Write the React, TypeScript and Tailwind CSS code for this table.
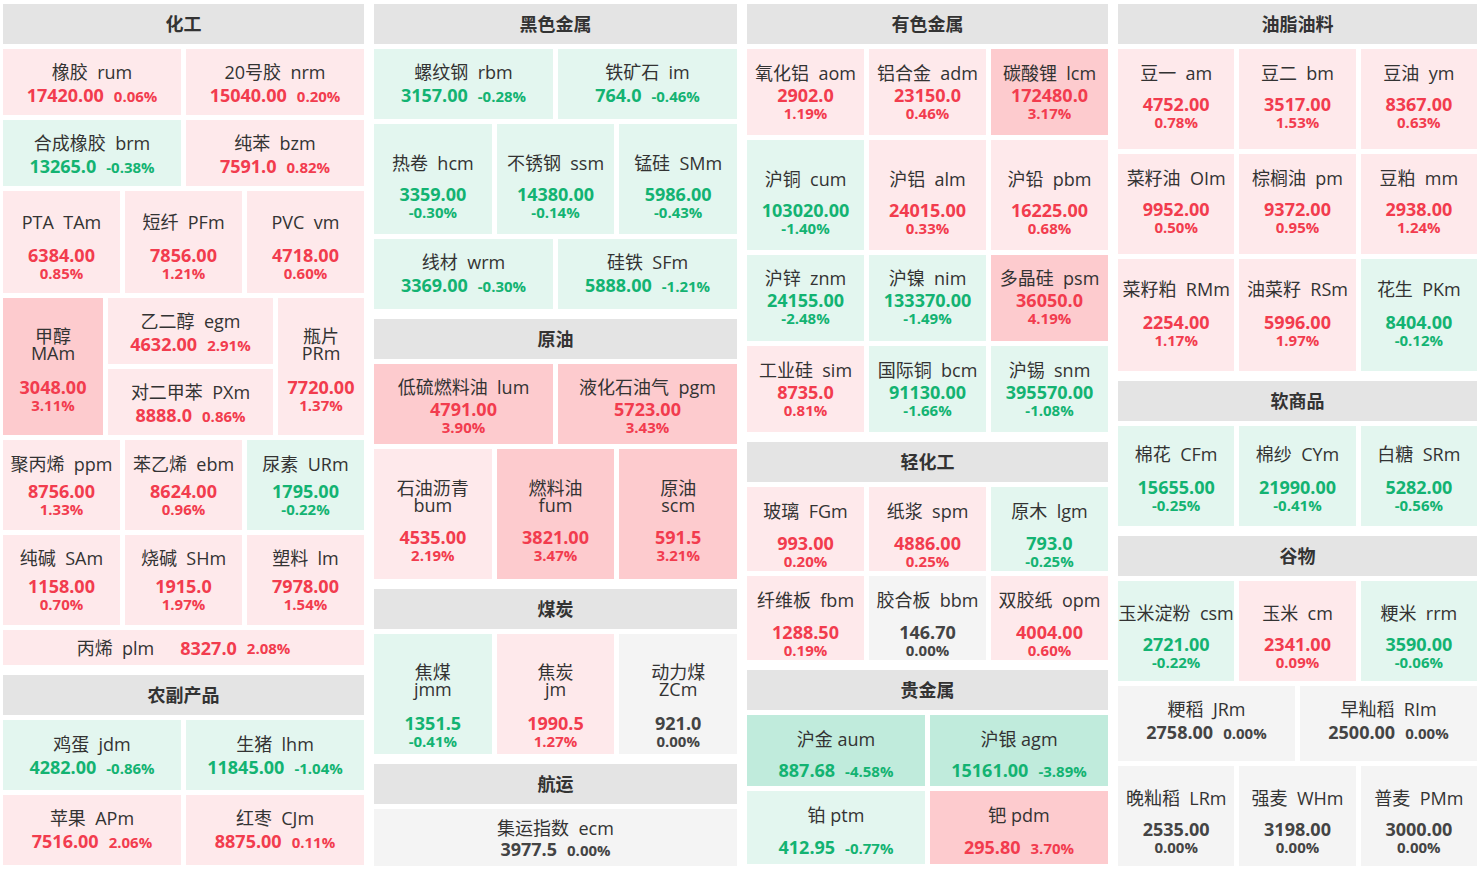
import clsx from 'clsx';

type Mode = 'inline' | 'stack' | 'wrap' | 'line';

type Quote = {
  cn: string;
  code: string;
  price: string;
  pct: string;
  w?: string;
  mode?: Mode;
  pt?: string;
  gap?: string;
  single?: boolean;
};

type Row = {
  h: string;
  mode: Mode;
  pt?: string;
  gap?: string;
  items: (Quote | Quote[])[];
};

type Section = { title: string; rows: Row[] };

const q = (cn: string, code: string, price: string, pct: string, extra: Partial<Quote> = {}): Quote => ({
  cn,
  code,
  price,
  pct,
  ...extra,
});

const columns: Section[][] = [
  [
    {
      title: '化工',
      rows: [
        { h: 'h-[66px]', mode: 'inline', pt: 'pt-[11px]', items: [q('橡胶', 'rum', '17420.00', '0.06%'), q('20号胶', 'nrm', '15040.00', '0.20%')] },
        { h: 'h-[66px]', mode: 'inline', pt: 'pt-[11px]', items: [q('合成橡胶', 'brm', '13265.0', '-0.38%'), q('纯苯', 'bzm', '7591.0', '0.82%')] },
        {
          h: 'h-[102px]',
          mode: 'stack',
          pt: 'pt-[19px]',
          gap: 'mt-[11px]',
          items: [q('PTA', 'TAm', '6384.00', '0.85%'), q('短纤', 'PFm', '7856.00', '1.21%'), q('PVC', 'vm', '4718.00', '0.60%')],
        },
        {
          h: 'h-[137px]',
          mode: 'inline',
          pt: 'pt-[11px]',
          items: [
            q('甲醇', 'MAm', '3048.00', '3.11%', { w: 'w-[100px]', mode: 'wrap', pt: 'pt-[30px]', gap: 'mt-[15px]' }),
            [q('乙二醇', 'egm', '4632.00', '2.91%'), q('对二甲苯', 'PXm', '8888.0', '0.86%')],
            q('瓶片', 'PRm', '7720.00', '1.37%', { w: 'w-[86px]', mode: 'wrap', pt: 'pt-[30px]', gap: 'mt-[15px]' }),
          ],
        },
        {
          h: 'h-[90px]',
          mode: 'stack',
          pt: 'pt-[12px]',
          gap: 'mt-[5px]',
          items: [q('聚丙烯', 'ppm', '8756.00', '1.33%'), q('苯乙烯', 'ebm', '8624.00', '0.96%'), q('尿素', 'URm', '1795.00', '-0.22%')],
        },
        {
          h: 'h-[90px]',
          mode: 'stack',
          pt: 'pt-[11px]',
          gap: 'mt-[6px]',
          items: [q('纯碱', 'SAm', '1158.00', '0.70%'), q('烧碱', 'SHm', '1915.0', '1.97%'), q('塑料', 'lm', '7978.00', '1.54%')],
        },
        { h: 'h-[35px]', mode: 'line', items: [q('丙烯', 'plm', '8327.0', '2.08%')] },
      ],
    },
    {
      title: '农副产品',
      rows: [
        { h: 'h-[70px]', mode: 'inline', pt: 'pt-[12px]', items: [q('鸡蛋', 'jdm', '4282.00', '-0.86%'), q('生猪', 'lhm', '11845.00', '-1.04%')] },
        { h: 'h-[70px]', mode: 'inline', pt: 'pt-[11px]', items: [q('苹果', 'APm', '7516.00', '2.06%'), q('红枣', 'CJm', '8875.00', '0.11%')] },
      ],
    },
  ],
  [
    {
      title: '黑色金属',
      rows: [
        { h: 'h-[70px]', mode: 'inline', pt: 'pt-[11px]', items: [q('螺纹钢', 'rbm', '3157.00', '-0.28%'), q('铁矿石', 'im', '764.0', '-0.46%')] },
        {
          h: 'h-[110px]',
          mode: 'stack',
          pt: 'pt-[27px]',
          gap: 'mt-[9px]',
          items: [q('热卷', 'hcm', '3359.00', '-0.30%'), q('不锈钢', 'ssm', '14380.00', '-0.14%'), q('锰硅', 'SMm', '5986.00', '-0.43%')],
        },
        { h: 'h-[70px]', mode: 'inline', pt: 'pt-[11px]', items: [q('线材', 'wrm', '3369.00', '-0.30%'), q('硅铁', 'SFm', '5888.00', '-1.21%')] },
      ],
    },
    {
      title: '原油',
      rows: [
        { h: 'h-[80px]', mode: 'stack', pt: 'pt-[11px]', items: [q('低硫燃料油', 'lum', '4791.00', '3.90%'), q('液化石油气', 'pgm', '5723.00', '3.43%')] },
        {
          h: 'h-[130px]',
          mode: 'wrap',
          pt: 'pt-[31px]',
          gap: 'mt-[13px]',
          items: [q('石油沥青', 'bum', '4535.00', '2.19%'), q('燃料油', 'fum', '3821.00', '3.47%'), q('原油', 'scm', '591.5', '3.21%')],
        },
      ],
    },
    {
      title: '煤炭',
      rows: [
        {
          h: 'h-[120px]',
          mode: 'wrap',
          pt: 'pt-[30px]',
          gap: 'mt-[15px]',
          items: [q('焦煤', 'jmm', '1351.5', '-0.41%'), q('焦炭', 'jm', '1990.5', '1.27%'), q('动力煤', 'ZCm', '921.0', '0.00%')],
        },
      ],
    },
    {
      title: '航运',
      rows: [{ h: 'h-[57px]', mode: 'inline', pt: 'pt-[7px]', gap: 'mt-[-2px]', items: [q('集运指数', 'ecm', '3977.5', '0.00%')] }],
    },
  ],
  [
    {
      title: '有色金属',
      rows: [
        {
          h: 'h-[86px]',
          mode: 'stack',
          pt: 'pt-[12px]',
          items: [q('氧化铝', 'aom', '2902.0', '1.19%'), q('铝合金', 'adm', '23150.0', '0.46%'), q('碳酸锂', 'lcm', '172480.0', '3.17%')],
        },
        {
          h: 'h-[110px]',
          mode: 'stack',
          pt: 'pt-[27px]',
          gap: 'mt-[9px]',
          items: [q('沪铜', 'cum', '103020.00', '-1.40%'), q('沪铝', 'alm', '24015.00', '0.33%'), q('沪铅', 'pbm', '16225.00', '0.68%')],
        },
        {
          h: 'h-[86px]',
          mode: 'stack',
          pt: 'pt-[11px]',
          items: [q('沪锌', 'znm', '24155.00', '-2.48%'), q('沪镍', 'nim', '133370.00', '-1.49%'), q('多晶硅', 'psm', '36050.0', '4.19%')],
        },
        {
          h: 'h-[86px]',
          mode: 'stack',
          pt: 'pt-[12px]',
          items: [q('工业硅', 'sim', '8735.0', '0.81%'), q('国际铜', 'bcm', '91130.00', '-1.66%'), q('沪锡', 'snm', '395570.00', '-1.08%')],
        },
      ],
    },
    {
      title: '轻化工',
      rows: [
        {
          h: 'h-[84px]',
          mode: 'stack',
          pt: 'pt-[12px]',
          gap: 'mt-[10px]',
          items: [q('玻璃', 'FGm', '993.00', '0.20%'), q('纸浆', 'spm', '4886.00', '0.25%'), q('原木', 'lgm', '793.0', '-0.25%')],
        },
        {
          h: 'h-[84px]',
          mode: 'stack',
          pt: 'pt-[12px]',
          gap: 'mt-[10px]',
          items: [q('纤维板', 'fbm', '1288.50', '0.19%'), q('胶合板', 'bbm', '146.70', '0.00%'), q('双胶纸', 'opm', '4004.00', '0.60%')],
        },
      ],
    },
    {
      title: '贵金属',
      rows: [
        {
          h: 'h-[71px]',
          mode: 'inline',
          pt: 'pt-[12px]',
          gap: 'mt-[8px]',
          items: [q('沪金', 'aum', '887.68', '-4.58%', { single: true }), q('沪银', 'agm', '15161.00', '-3.89%', { single: true })],
        },
        {
          h: 'h-[73px]',
          mode: 'inline',
          pt: 'pt-[12px]',
          gap: 'mt-[9px]',
          items: [q('铂', 'ptm', '412.95', '-0.77%', { single: true }), q('钯', 'pdm', '295.80', '3.70%', { single: true })],
        },
      ],
    },
  ],
  [
    {
      title: '油脂油料',
      rows: [
        {
          h: 'h-[100px]',
          mode: 'stack',
          pt: 'pt-[12px]',
          gap: 'mt-[9px]',
          items: [q('豆一', 'am', '4752.00', '0.78%'), q('豆二', 'bm', '3517.00', '1.53%'), q('豆油', 'ym', '8367.00', '0.63%')],
        },
        {
          h: 'h-[100px]',
          mode: 'stack',
          pt: 'pt-[12px]',
          gap: 'mt-[9px]',
          items: [q('菜籽油', 'OIm', '9952.00', '0.50%'), q('棕榈油', 'pm', '9372.00', '0.95%'), q('豆粕', 'mm', '2938.00', '1.24%')],
        },
        {
          h: 'h-[112px]',
          mode: 'stack',
          pt: 'pt-[18px]',
          gap: 'mt-[11px]',
          items: [q('菜籽粕', 'RMm', '2254.00', '1.17%'), q('油菜籽', 'RSm', '5996.00', '1.97%'), q('花生', 'PKm', '8404.00', '-0.12%')],
        },
      ],
    },
    {
      title: '软商品',
      rows: [
        {
          h: 'h-[100px]',
          mode: 'stack',
          pt: 'pt-[16px]',
          gap: 'mt-[11px]',
          items: [q('棉花', 'CFm', '15655.00', '-0.25%'), q('棉纱', 'CYm', '21990.00', '-0.41%'), q('白糖', 'SRm', '5282.00', '-0.56%')],
        },
      ],
    },
    {
      title: '谷物',
      rows: [
        {
          h: 'h-[100px]',
          mode: 'stack',
          pt: 'pt-[20px]',
          gap: 'mt-[9px]',
          items: [q('玉米淀粉', 'csm', '2721.00', '-0.22%'), q('玉米', 'cm', '2341.00', '0.09%'), q('粳米', 'rrm', '3590.00', '-0.06%')],
        },
        { h: 'h-[75px]', mode: 'inline', pt: 'pt-[11px]', items: [q('粳稻', 'JRm', '2758.00', '0.00%'), q('早籼稻', 'RIm', '2500.00', '0.00%')] },
        {
          h: 'h-[100px]',
          mode: 'stack',
          pt: 'pt-[20px]',
          gap: 'mt-[9px]',
          items: [q('晚籼稻', 'LRm', '2535.00', '0.00%'), q('强麦', 'WHm', '3198.00', '0.00%'), q('普麦', 'PMm', '3000.00', '0.00%')],
        },
      ],
    },
  ],
];

// Big moves (3% either way) get the stronger tint.
function tone(pct: string) {
  const v = parseFloat(pct);
  if (v >= 3) return { bg: 'bg-[#fdcbce]', fg: 'text-[#f23c4e]' };
  if (v > 0) return { bg: 'bg-[#fee9eb]', fg: 'text-[#f23c4e]' };
  if (v <= -3) return { bg: 'bg-[#c0ebdc]', fg: 'text-[#13b372]' };
  if (v < 0) return { bg: 'bg-[#e3f6ef]', fg: 'text-[#13b372]' };
  return { bg: 'bg-[#f4f4f4]', fg: 'text-[#444]' };
}

function Tile({ quote, mode, pt, gap }: { quote: Quote; mode: Mode; pt?: string; gap?: string }) {
  const m = quote.mode ?? mode;
  const { bg, fg } = tone(quote.pct);
  const sep = quote.single ? '\u00a0' : '\u00a0\u00a0';

  if (m === 'line') {
    return (
      <div className={clsx('flex flex-1 items-center justify-center text-[#333]', bg)}>
        <span className="text-[18px] leading-[24px] whitespace-nowrap">
          {quote.cn}
          {sep}
          {quote.code}
        </span>
        <span className={clsx('ml-[26px] text-[18px] font-bold leading-[24px]', fg)}>{quote.price}</span>
        <span className={clsx('ml-[10px] text-[15px] font-bold leading-[24px]', fg)}>{quote.pct}</span>
      </div>
    );
  }

  return (
    <div className={clsx('flex min-w-0 flex-col items-center text-[#333]', bg, quote.w ?? 'flex-1', quote.pt ?? pt)}>
      {m === 'wrap' ? (
        <div className="flex flex-col items-center text-[18px] leading-[17px]">
          <span>{quote.cn}</span>
          <span>{quote.code}</span>
        </div>
      ) : (
        <div className="text-[18px] leading-[24px] whitespace-nowrap">
          {quote.cn}
          {sep}
          {quote.code}
        </div>
      )}

      {m === 'inline' ? (
        <div className={clsx('flex items-baseline gap-[10px] whitespace-nowrap font-bold leading-[22px]', fg, quote.gap ?? gap)}>
          <span className="text-[18px]">{quote.price}</span>
          <span className="text-[15px]">{quote.pct}</span>
        </div>
      ) : (
        <div className={clsx('flex flex-col items-center font-bold', fg, quote.gap ?? gap)}>
          <span className="text-[18px] leading-[20px]">{quote.price}</span>
          <span className="text-[15px] leading-[16px]">{quote.pct}</span>
        </div>
      )}
    </div>
  );
}

function SectionBlock({ section }: { section: Section }) {
  return (
    <div className="flex flex-col gap-[5px]">
      <div className="flex h-[40px] items-center justify-center bg-[#e4e4e4] text-[18px] font-bold text-[#333]">
        {section.title}
      </div>
      {section.rows.map((row, i) => (
        <div key={i} className={clsx('flex gap-[5px]', row.h)}>
          {row.items.map((item, j) =>
            Array.isArray(item) ? (
              <div key={j} className="flex min-w-0 flex-1 flex-col gap-[5px]">
                {item.map((sub) => (
                  <div key={sub.code} className="flex flex-1">
                    <Tile quote={sub} mode={row.mode} pt={row.pt} gap={row.gap} />
                  </div>
                ))}
              </div>
            ) : (
              <Tile key={item.code} quote={item} mode={row.mode} pt={row.pt} gap={row.gap} />
            ),
          )}
        </div>
      ))}
    </div>
  );
}

export default function App() {
  return (
    <div className="min-h-[873px] bg-white px-[3px] pt-[4px] font-['Open_Sans','Noto_Sans_CJK_SC',sans-serif]">
      <div className="grid grid-cols-[361px_363px_361px_359px] items-start gap-[10px]">
        {columns.map((col, i) => (
          <div key={i} className="flex flex-col gap-[10px]">
            {col.map((section) => (
              <SectionBlock key={section.title} section={section} />
            ))}
          </div>
        ))}
      </div>
    </div>
  );
}
